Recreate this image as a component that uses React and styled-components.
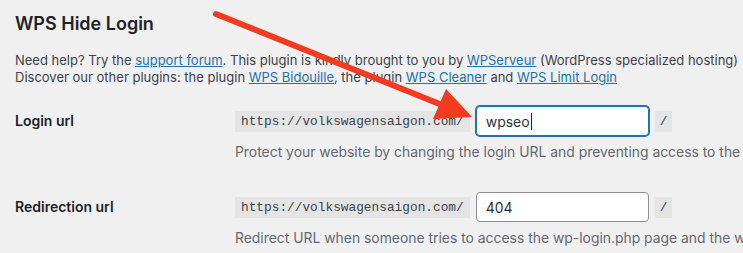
import { Fragment } from "react";
import styled, { createGlobalStyle } from "styled-components";

const GlobalStyle = createGlobalStyle`
  html, body {
    margin: 0;
    padding: 0;
    background: #f0f0f1;
  }
  body {
    font-family: Inter, "Noto Sans", "Liberation Sans", sans-serif;
    color: #1d2327;
  }
`;

const Page = styled.div`
  position: relative;
  width: 743px;
  height: 253px;
  overflow: hidden;
  padding: 0 15px;
  box-sizing: border-box;
`;

const Title = styled.h2`
  margin: 12px 0 0;
  font-size: 18px;
  line-height: 23px;
  font-weight: 600;
  color: #1d2327;
`;

const Intro = styled.p`
  margin: 17px 0 0;
  font-size: 13px;
  line-height: 16.5px;
  color: #3c434a;
  white-space: nowrap;

  a {
    color: #2271b1;
    text-decoration: underline;
  }
`;

const FormTable = styled.div`
  display: grid;
  grid-template-columns: 220px 1fr;
  margin-top: 21px;
  row-gap: 30px;
`;

const Label = styled.div`
  font-size: 14px;
  font-weight: 600;
  line-height: 30px;
  color: #1d2327;
`;

const Field = styled.div`
  display: flex;
  flex-direction: column;
  white-space: nowrap;
`;

const InputRow = styled.div`
  display: flex;
  align-items: center;
  gap: 6px;
`;

const Code = styled.code`
  font-family: "Liberation Mono", "DejaVu Sans Mono", monospace;
  font-size: 12.8px;
  line-height: 21px;
  padding: 0 ${(p) => (p.$tight ? 5 : 6)}px;
  background: #e4e4e5;
  color: #3c434a;
`;

const Input = styled.div`
  box-sizing: border-box;
  width: 173px;
  height: 30px;
  padding: 0 9px;
  display: flex;
  align-items: center;
  font-size: 14px;
  color: #2c3338;
  background: #fff;
  border-radius: 4px;
  border: 1px solid ${(p) => (p.$focus ? "#2271b1" : "#8c8f94")};
  box-shadow: ${(p) => (p.$focus ? "0 0 0 1px #2271b1" : "none")};
`;

const Caret = styled.span`
  display: inline-block;
  width: 1px;
  height: 17px;
  background: #1d2327;
  margin-left: 1px;
`;

const Description = styled.p`
  margin: 6px 0 0;
  font-size: 13.9px;
  line-height: 20px;
  color: #646970;
`;

const ArrowLayer = styled.svg`
  position: absolute;
  left: 0;
  top: 0;
  pointer-events: none;
`;

const rows = [
  {
    label: "Login url",
    value: "wpseo",
    focus: true,
    help: "Protect your website by changing the login URL and preventing access to the wp-login.php page and the wp-admin directory to non-connected people.",
  },
  {
    label: "Redirection url",
    value: "404",
    focus: false,
    help: "Redirect URL when someone tries to access the wp-login.php page and the wp-admin directory while not logged in.",
  },
];

export default function App() {
  return (
    <>
      <GlobalStyle />
      <Page>
        <Title>WPS Hide Login</Title>
        <Intro>
          Need help? Try the <a href="#">support forum</a>. This plugin is
          kindly brought to you by <a href="#">WPServeur</a> (WordPress
          specialized hosting)
          <br />
          Discover our other plugins: the plugin <a href="#">WPS Bidouille</a>,
          the plugin <a href="#">WPS Cleaner</a> and{" "}
          <a href="#">WPS Limit Login</a>
        </Intro>
        <FormTable>
          {rows.map((row) => (
            <Fragment key={row.label}>
              <Label>{row.label}</Label>
              <Field>
                <InputRow>
                  <Code>https://volkswagensaigon.com/</Code>
                  <Input $focus={row.focus}>
                    {row.value}
                    {row.focus && <Caret />}
                  </Input>
                  <Code $tight>/</Code>
                </InputRow>
                <Description>{row.help}</Description>
              </Field>
            </Fragment>
          ))}
        </FormTable>
        <ArrowLayer width="743" height="253" viewBox="0 0 743 253">
          <line
            x1="216"
            y1="14"
            x2="442"
            y2="105"
            stroke="#f43b1f"
            strokeWidth="6"
            strokeLinecap="round"
          />
          <polygon points="472,117 446,89 433,119" fill="#f43b1f" />
        </ArrowLayer>
      </Page>
    </>
  );
}
